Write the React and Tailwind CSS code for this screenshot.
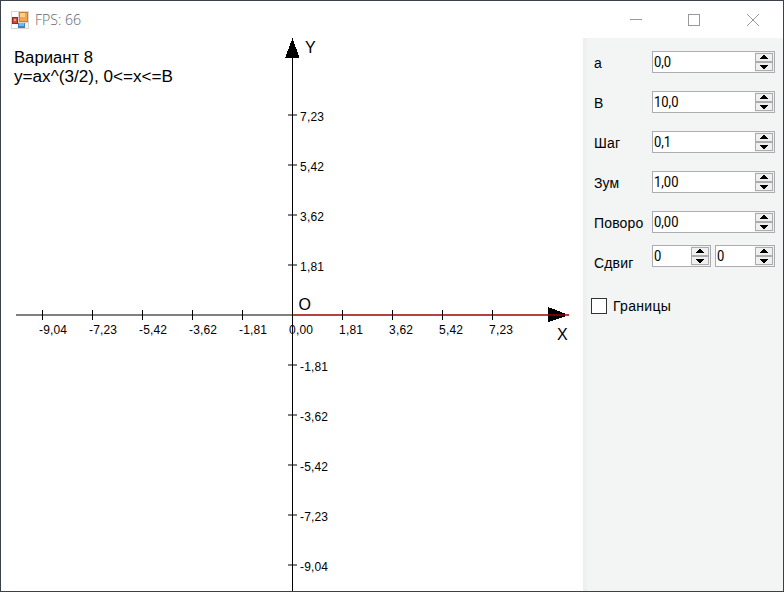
const ARIAL = "font-['Liberation_Sans',Arial,sans-serif]";

function AppIcon() {
  return (
    <svg width="18" height="18" viewBox="0 0 18 18" shapeRendering="crispEdges">
      <rect width="18" height="18" fill="#d9d5cf" />
      <rect x="1" y="1" width="6" height="5" fill="#fff" />
      <rect x="1" y="13" width="6" height="4" fill="#fff" />
      <rect x="14" y="12" width="3" height="5" fill="#f5f3f0" />
      <rect x="8" y="1" width="9" height="10" fill="#c9802f" />
      <rect x="9" y="2" width="7" height="8" fill="#f0a850" />
      <rect x="9" y="2" width="5" height="4" fill="#fbd08a" />
      <rect x="1" y="6" width="6" height="7" fill="#96281c" />
      <rect x="2" y="7" width="4" height="5" fill="#c8503c" />
      <rect x="3" y="8" width="2" height="2" fill="#eba090" />
      <rect x="7" y="12" width="7" height="5" fill="#3b84c8" />
      <rect x="8" y="12" width="5" height="3" fill="#7ab8f0" />
    </svg>
  );
}

function TitleBar() {
  return (
    <header className="flex h-[37px] shrink-0 items-center bg-white pl-[10px]">
      <AppIcon />
      <span className="mb-px ml-[6px] w-[560px] origin-left scale-x-[0.94] whitespace-nowrap font-['Open_Sans','Noto_Sans',sans-serif] text-[15px] font-light leading-[20px] text-[#666]">
        FPS: 66
      </span>
      <svg className="ml-auto mr-[20px] shrink-0" width="134" height="14" viewBox="0 0 134 14" fill="none" stroke="#999">
        <path d="M1 6.5h12M59.5 1.5h11v11h-11z" shapeRendering="crispEdges" />
        <path d="M118 1l12 12M130 1l-12 12" />
      </svg>
    </header>
  );
}

const STEPS_X = [
  [-5, "-9,04"], [-4, "-7,23"], [-3, "-5,42"], [-2, "-3,62"], [-1, "-1,81"],
  [0, "0,00"], [1, "1,81"], [2, "3,62"], [3, "5,42"], [4, "7,23"],
];
const STEPS_Y = [
  [4, "7,23"], [3, "5,42"], [2, "3,62"], [1, "1,81"],
  [-1, "-1,81"], [-2, "-3,62"], [-3, "-5,42"], [-4, "-7,23"], [-5, "-9,04"],
];

function Plot() {
  return (
    <svg className={"block shrink-0 " + ARIAL} width="582" height="553" viewBox="1 38 582 553">
      <g shapeRendering="crispEdges">
        <rect x="16" y="314" width="553" height="2" fill="#808080" />
        {STEPS_Y.map(([n]) => (
          <rect key={n} x="288" y={314 - n * 50} width="9" height="2" fill="#808080" />
        ))}
        <rect x="292" y="39" width="1" height="552" fill="#000" />
        <path d="M292.5 38L299.5 58H285z" fill="#000" />
        <path d="M548 307L569 315L548 322z" fill="#000" />
        <rect x="293" y="314" width="276" height="2" fill="#b94040" />
        <rect x="548" y="314" width="17" height="2" fill="#700010" />
        {STEPS_X.map(([n]) => (
          <rect key={n} x={292 + n * 50} y="310" width="1" height="10" fill="#000" />
        ))}
      </g>
      <g fontSize="12" fill="#000">
        {STEPS_X.map(([n, t]) => (
          <text key={n} x={289 + n * 50} y="334" textLength={n < 0 ? 28 : 24}>{t}</text>
        ))}
        {STEPS_Y.map(([n, t]) => (
          <text key={n} x="300" y={321 - n * 50} textLength={n < 0 ? 28 : 24}>{t}</text>
        ))}
      </g>
      <g fontSize="16" fill="#000">
        <text x="14" y="63" textLength="79" lengthAdjust="spacingAndGlyphs">Вариант 8</text>
        <text x="14" y="82" textLength="159" lengthAdjust="spacingAndGlyphs">y=ax^(3/2), 0&lt;=x&lt;=B</text>
        <text x="305" y="53">Y</text>
        <text x="298.5" y="310">O</text>
        <text x="557" y="340">X</text>
      </g>
    </svg>
  );
}

function SpinButton({ up }) {
  return (
    <span className={"flex h-[9px] w-[18px] justify-center border border-[#acacac] bg-[#f0f0f0] " + (up ? "pt-px" : "pt-[2px]")}>
      <svg className="shrink-0" width="8" height="4" viewBox="0 0 8 4" shapeRendering="crispEdges">
        <path d={up ? "M3 0h2v1h1v1h1v1h1v1H0V3h1V2h1V1h1z" : "M0 0h8v1H7v1H6v1H5v1H3V3H2V2H1V1H0z"} />
      </svg>
    </span>
  );
}

function Spinner({ value, width = "w-[123px]" }) {
  return (
    <div className={"flex h-[22px] shrink-0 justify-between border border-[#abadb3] bg-white " + width}>
      <span className="origin-left scale-x-[0.93] pl-[1px] font-['Roboto',sans-serif] text-[14px] leading-[20px] text-black">{value}</span>
      <span className="flex w-[19px] flex-col bg-[#f0f0f0] pt-px">
        <SpinButton up />
        <SpinButton />
      </span>
    </div>
  );
}

function Row({ label, children, height = "h-[40px]" }) {
  return (
    <div className={"flex items-start " + height}>
      <span className={"w-[58px] shrink-0 whitespace-nowrap pt-[3px] text-[14px] leading-[18px] tracking-[0.15px] " + ARIAL}>{label}</span>
      {children}
    </div>
  );
}

export default function App() {
  return (
    <div className="flex h-[592px] w-[784px] flex-col overflow-hidden border border-[#3b414b] bg-white text-black">
      <TitleBar />
      <main className="flex min-h-0 flex-1">
        <Plot />
        <aside className="flex min-w-0 flex-1 flex-col border-l-4 border-[#efefef] bg-[#f3f5f4] pl-[7px] pt-[13px]">
          <Row label="a"><Spinner value="0,0" /></Row>
          <Row label="B"><Spinner value="10,0" /></Row>
          <Row label="Шаг"><Spinner value="0,1" /></Row>
          <Row label="Зум"><Spinner value="1,00" /></Row>
          <Row label="Поворо" height="h-[34px]"><Spinner value="0,00" /></Row>
          <div className="flex h-[53px] items-start">
            <span className={"w-[58px] shrink-0 pt-[9px] text-[14px] leading-[18px] tracking-[0.15px] " + ARIAL}>Сдвиг</span>
            <div className="flex gap-1">
              <Spinner value="0" width="w-[59px]" />
              <Spinner value="0" width="w-[60px]" />
            </div>
          </div>
          <div className="-ml-[3px] -mt-px flex items-center gap-[6px]">
            <span className="h-4 w-4 border border-[#333] bg-white" />
            <span className={"text-[14px] leading-[18px] tracking-[0.3px] " + ARIAL}>Границы</span>
          </div>
        </aside>
      </main>
    </div>
  );
}
